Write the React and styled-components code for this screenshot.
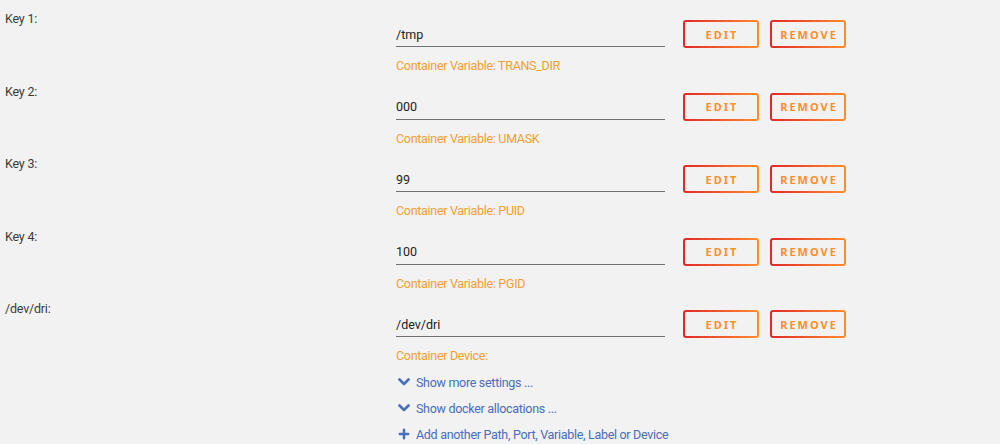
import React from "react";
import styled, { createGlobalStyle } from "styled-components";

const GlobalStyle = createGlobalStyle`
  html, body {
    margin: 0;
    padding: 0;
    background: #f2f2f2;
    font-family: Roboto, "Noto Sans", sans-serif;
  }
`;

const List = styled.div`
  padding-top: 9px;
  display: flex;
  flex-direction: column;
`;

const Row = styled.div`
  display: flex;
  padding-bottom: 6.5px;
`;

const Label = styled.div`
  width: 391px;
  padding-left: 5px;
  font-size: 12.5px;
  letter-spacing: -0.2px;
  line-height: 20px;
  color: #3a3a3a;
`;

const Field = styled.div`
  display: flex;
  flex-direction: column;
`;

const FieldLine = styled.div`
  display: flex;
  align-items: flex-start;
  margin-top: 11px;
  height: 28px;
`;

const Input = styled.input`
  box-sizing: border-box;
  width: 269px;
  height: 27px;
  padding: 2px 0 0 0;
  border: none;
  border-bottom: 1px solid #707070;
  background: transparent;
  font-family: Roboto, sans-serif;
  font-size: 12.5px;
  color: #222;
  outline: none;
`;

const Button = styled.button`
  box-sizing: border-box;
  width: 76px;
  height: 28px;
  margin-left: ${({ $gap }) => $gap}px;
  border: 2px solid transparent;
  border-radius: 3px;
  background: linear-gradient(#f2f2f2, #f2f2f2) padding-box,
    linear-gradient(90deg, #e22828, #ff8c2f) border-box;
  color: #f98f2e;
  font-family: "Noto Sans", sans-serif;
  font-weight: bold;
  font-size: 11px;
  letter-spacing: 2px;
  text-transform: uppercase;
  cursor: pointer;
  padding: 0 0 0 2px;
`;

const Hint = styled.div`
  margin-top: 9px;
  font-size: 12.5px;
  letter-spacing: -0.3px;
  line-height: 18px;
  color: #f0a030;
`;

const Links = styled.div`
  margin-top: 4px;
  display: flex;
  flex-direction: column;
`;

const LinkRow = styled.a`
  display: flex;
  align-items: center;
  gap: 6px;
  height: 26px;
  padding-left: 2px;
  font-size: 12.5px;
  letter-spacing: -0.3px;
  color: #486dba;
  text-decoration: none;
  cursor: pointer;
`;

const Icon = styled.svg`
  width: 12px;
  height: 12px;
  flex: none;
`;

function Chevron() {
  return (
    <Icon viewBox="0 0 12 12">
      <path d="M1.5 3.5 L6 8 L10.5 3.5" fill="none" stroke="#486dba" strokeWidth="2.6" strokeLinecap="round" strokeLinejoin="round" />
    </Icon>
  );
}

function PlusIcon() {
  return (
    <Icon viewBox="0 0 12 12">
      <path d="M6 1.8 V10.2 M1.8 6 H10.2" fill="none" stroke="#486dba" strokeWidth="2.4" strokeLinecap="round" />
    </Icon>
  );
}

const rows = [
  { label: "Key 1:", value: "/tmp", hint: "Container Variable: TRANS_DIR" },
  { label: "Key 2:", value: "000", hint: "Container Variable: UMASK" },
  { label: "Key 3:", value: "99", hint: "Container Variable: PUID" },
  { label: "Key 4:", value: "100", hint: "Container Variable: PGID" },
  { label: "/dev/dri:", value: "/dev/dri", hint: "Container Device:" },
];

export default function App() {
  return (
    <>
      <GlobalStyle />
      <List>
        {rows.map((row, i) => (
          <Row key={row.label}>
            <Label>{row.label}</Label>
            <Field>
              <FieldLine>
                <Input defaultValue={row.value} readOnly />
                <Button $gap={18}>Edit</Button>
                <Button $gap={11}>Remove</Button>
              </FieldLine>
              <Hint>{row.hint}</Hint>
              {i === rows.length - 1 && (
                <Links>
                  <LinkRow>
                    <Chevron />
                    Show more settings ...
                  </LinkRow>
                  <LinkRow>
                    <Chevron />
                    Show docker allocations ...
                  </LinkRow>
                  <LinkRow>
                    <PlusIcon />
                    Add another Path, Port, Variable, Label or Device
                  </LinkRow>
                </Links>
              )}
            </Field>
          </Row>
        ))}
      </List>
    </>
  );
}
